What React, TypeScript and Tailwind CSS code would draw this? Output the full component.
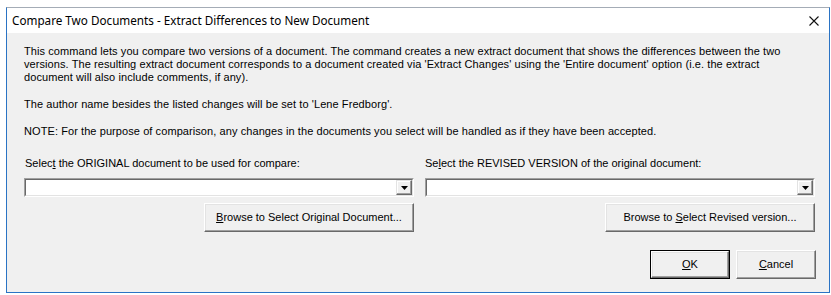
import React from "react";

const body = { fontFamily: '"Liberation Sans", Arial, sans-serif' } as React.CSSProperties;

function Combo() {
  return (
    <div className="flex h-[19px] w-full border border-t-[#a0a0a0] border-l-[#a0a0a0] border-r-white border-b-white bg-white">
      <div className="flex flex-1 border border-t-[#696969] border-l-[#696969] border-r-[#e3e3e3] border-b-[#e3e3e3]">
        <div className="flex-1" />
        <div className="flex h-full w-[16px] items-center justify-center border border-t-[#e3e3e3] border-l-[#e3e3e3] border-r-[#696969] border-b-[#696969] bg-[#f0f0f0] shadow-[inset_-1px_-1px_0_#a0a0a0,inset_1px_1px_0_#ffffff]">
          <svg width="7" height="4" viewBox="0 0 7 4">
            <path d="M0 0h7L3.5 4z" fill="#000" />
          </svg>
        </div>
      </div>
    </div>
  );
}

function Btn({ children, w, def }: { children: React.ReactNode; w: string; def?: boolean }) {
  const inner = (
    <div className="flex h-full w-full items-center justify-center border border-t-white border-l-white border-r-[#696969] border-b-[#696969] bg-[#f0f0f0] text-[11px] text-black shadow-[inset_-1px_-1px_0_#a0a0a0,inset_1px_1px_0_#e3e3e3]">
      {children}
    </div>
  );
  return def ? (
    <div className={`h-[29px] ${w} border border-black`}>{inner}</div>
  ) : (
    <div className={`h-[29px] ${w}`}>{inner}</div>
  );
}

export default function App() {
  return (
    <div className="h-[295px] w-[831px] bg-white pl-[6px] pt-[7px]" style={body}>
      <div className="flex h-[286px] w-[824px] flex-col border border-t-[#a4acb6] border-l-[#2a73c4] border-r-[#2a73c4] border-b-[#2a73c4] bg-[#f0f0f0]">
        <div className="flex h-[25px] items-center justify-between bg-white pl-[5px] pr-[10px]">
          <span className="text-[11.7px] text-black" style={{ fontFamily: '"Noto Sans", "Open Sans", sans-serif' }}>
            Compare Two Documents - Extract Differences to New Document
          </span>
          <svg width="10" height="10" viewBox="0 0 10 10">
            <path d="M0.5 0.5L9.5 9.5M9.5 0.5L0.5 9.5" stroke="#111" strokeWidth="1.1" />
          </svg>
        </div>
        <div className="flex flex-1 flex-col pl-[17px] pr-[13px] pt-[12px] text-[11px] leading-[13px] text-black">
          <p className="whitespace-nowrap tracking-[0.08px]">
            This command lets you compare two versions of a document. The command creates a new extract document that shows the differences between the two
            <br />
            versions. The resulting extract document corresponds to a document created via 'Extract Changes' using the 'Entire document' option (i.e. the extract
            <br />
            document will also include comments, if any).
          </p>
          <p className="mt-[14px] whitespace-nowrap tracking-[0.08px]">The author name besides the listed changes will be set to 'Lene Fredborg'.</p>
          <p className="mt-[14px] whitespace-nowrap tracking-[0.08px]">
            NOTE: For the purpose of comparison, any changes in the documents you select will be handled as if they have been accepted.
          </p>
          <div className="mt-[19px] flex gap-[11px]">
            <div className="flex w-[390px] flex-col">
              <div className="pl-[1px]">
                Selec<u>t</u> the ORIGINAL document to be used for compare:
              </div>
              <div className="mt-[8px]">
                <Combo />
              </div>
              <div className="mt-[6px] flex justify-end">
                <Btn w="w-[210px]">
                  <span>
                    <u>B</u>rowse to Select Original Document...
                  </span>
                </Btn>
              </div>
            </div>
            <div className="flex w-[390px] flex-col">
              <div>
                Se<u>l</u>ect the REVISED VERSION of the original document:
              </div>
              <div className="mt-[8px]">
                <Combo />
              </div>
              <div className="mt-[6px] flex justify-end">
                <Btn w="w-[210px]">
                  <span>
                    Browse to <u>S</u>elect Revised version...
                  </span>
                </Btn>
              </div>
            </div>
          </div>
          <div className="mt-[18px] flex justify-end gap-[6px]">
            <Btn w="w-[80px]" def>
              <span>
                <u>O</u>K
              </span>
            </Btn>
            <Btn w="w-[80px]">
              <span>
                <u>C</u>ancel
              </span>
            </Btn>
          </div>
        </div>
      </div>
    </div>
  );
}
